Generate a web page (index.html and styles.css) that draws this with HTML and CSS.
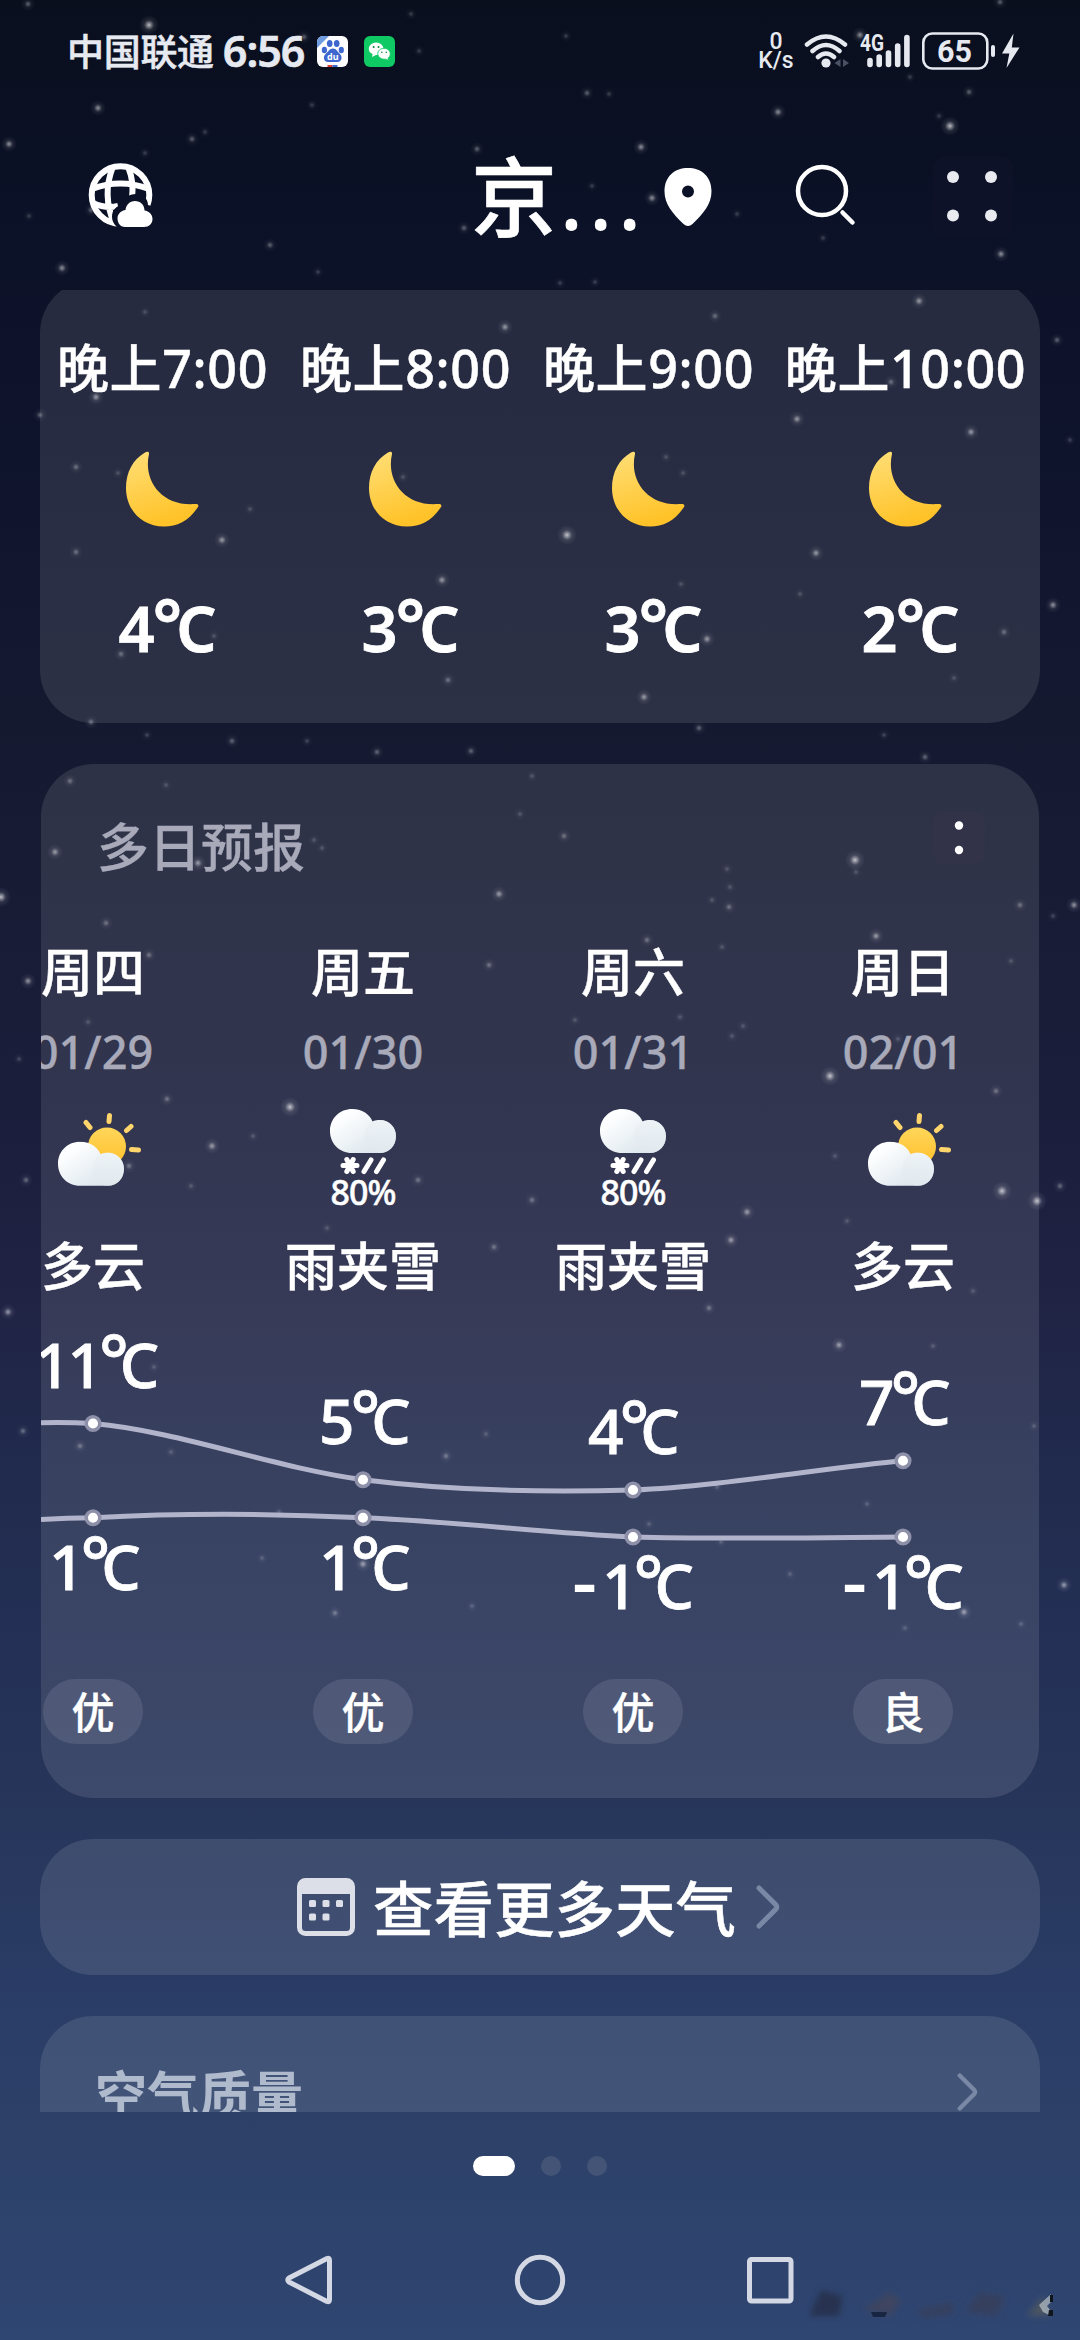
FILE: index.html
```html
<!DOCTYPE html>
<html lang="zh-CN">
<head>
<meta charset="utf-8">
<title>天气</title>
<link rel="stylesheet" href="styles.css">
</head>
<body>
<svg class="sky" id="sky" viewBox="0 0 1080 2340" aria-hidden="true">
  <defs>
    <radialGradient id="star">
      <stop offset="0" stop-color="#fff"/>
      <stop offset=".25" stop-color="#fff" stop-opacity=".55"/>
      <stop offset=".5" stop-color="#fff" stop-opacity=".14"/>
      <stop offset="1" stop-color="#fff" stop-opacity="0"/>
    </radialGradient>
  </defs>
</svg>

<svg class="defs" aria-hidden="true">
  <defs>
    <linearGradient id="moonFill" x1="0" y1="0" x2=".3" y2="1">
      <stop offset="0" stop-color="#ffdf78"/><stop offset="1" stop-color="#ffc329"/>
    </linearGradient>
    <linearGradient id="sunFill" x1="0" y1="0" x2="0" y2="1">
      <stop offset="0" stop-color="#ffd65a"/><stop offset="1" stop-color="#ffc02c"/>
    </linearGradient>
    <linearGradient id="cloudFill" x1="0" y1="0" x2="1" y2="1">
      <stop offset=".2" stop-color="#fdfeff"/><stop offset="1" stop-color="#d3e0e8"/>
    </linearGradient>
    <linearGradient id="puffFill" x1="0" y1="1" x2="1" y2="0">
      <stop offset="0" stop-color="#e0e8ee"/><stop offset="1" stop-color="#f2f6f9"/>
    </linearGradient>
    <symbol id="moon" viewBox="0 0 74 76">
      <path d="M20 1.500C22.500 0 24.500.8 24 3C18 29 36 55.500 70 53C73 52.700 74 54 73 56C64 70 52 75.500 39 75.500C17 75.500 1 59 1 37C1 21 8 8.500 20 1.500Z" fill="url(#moonFill)"/>
    </symbol>
    <symbol id="cloud" viewBox="0 0 66 44">
      <path d="M22 0C33 0 40 6 42.500 12.500C45 11.500 47 11 50 11C59 11 66 18 66 27C66 37 59 44 50 44H22C9 44 0 34 0 22C0 9 10 0 22 0Z" fill="url(#cloudFill)"/>
      <path d="M42.500 12.500C45 11.500 47 11 50 11C59 11 66 18 66 27C66 37 59 44 50 44C40 44 34 36 34.500 26C35 19 38 15 42.500 12.500Z" fill="url(#puffFill)" opacity=".6"/>
    </symbol>
    <symbol id="partly" viewBox="0 0 84 74">
      <circle cx="50" cy="33.500" r="19" fill="url(#sunFill)"/>
      <g stroke="#ffd56c" stroke-width="5" stroke-linecap="round">
        <path d="M52.500 2.500L52 8.500M29 9.500L33 14.500M74 13.500L69.500 17.500M74.500 36.500L81.500 37"/>
      </g>
      <use href="#cloud" x="1" y="28.500" width="66" height="44.500"/>
    </symbol>
    <symbol id="sleet" viewBox="0 0 66 66">
      <use href="#cloud" x="0" y="0" width="66" height="44"/>
      <g stroke="#fff" stroke-width="5" stroke-linecap="round">
        <path d="M13 56.500H27M16.800 50.500L23.200 62.500M23.200 50.500L16.800 62.500"/>
        <path d="M41 51L34 62.500M53.500 51L46.500 62.500"/>
      </g>
    </symbol>
  </defs>
</svg>

<div class="status-bar">
  <div class="status-left">
    <span class="carrier">中国联通</span>
    <span class="clock">6:56</span>
    <svg class="app-icon" viewBox="0 0 31 31">
      <defs><clipPath id="tile"><rect width="31" height="31" rx="6"/></clipPath></defs>
      <g clip-path="url(#tile)">
        <rect width="31" height="31" fill="#fdfdff"/>
        <path d="M0 0H12L0 12Z" fill="#6f9be0"/>
        <rect x="10.500" y="29" width="5" height="2" fill="#e0392f"/>
        <rect x="15.500" y="29" width="5" height="2" fill="#3a6bd0"/>
      </g>
      <g fill="#3d66cf">
        <ellipse cx="12.700" cy="7.500" rx="2.800" ry="3.600"/>
        <ellipse cx="19.700" cy="7.500" rx="2.800" ry="3.600"/>
        <ellipse cx="7.400" cy="14" rx="2.600" ry="3.300"/>
        <ellipse cx="24.300" cy="14" rx="2.600" ry="3.300"/>
        <path d="M16 12.500C19.500 12.500 20.500 16 23 18C26 21 24.500 26 20.500 26H11C7 26 5.500 21 8.500 18C11 16 12.500 12.500 16 12.500Z"/>
      </g>
      <text class="du" x="15.800" y="24" text-anchor="middle">du</text>
    </svg>
    <svg class="app-icon wechat" viewBox="0 0 31 31">
      <rect width="31" height="31" rx="6" fill="#0fc964"/>
      <path d="M12 6.500C16.500 6.500 19.500 9.500 19.500 13C19.500 16.500 16.500 19 12 19L8 21L8.600 18C6 17 4.800 15 4.800 13C4.800 9.500 8 6.500 12 6.500Z" fill="#fff"/>
      <path d="M20 12.300C23.500 12.300 26.300 14.800 26.300 17.800C26.300 19.800 25.300 21.300 24 22.200L24.500 24.500L21.700 23.200C17 23.700 13.800 21 13.800 17.800C13.800 14.800 16.500 12.300 20 12.300Z" fill="#fff" stroke="#0fc964" stroke-width=".9"/>
      <g fill="#0a7f42"><circle cx="9.700" cy="11" r="1"/><circle cx="14.500" cy="11" r="1"/><circle cx="17.800" cy="16.300" r=".8"/><circle cx="22.300" cy="16.300" r=".8"/></g>
    </svg>
  </div>
  <div class="status-right">
    <div class="netspeed"><span>0</span><span>K/s</span></div>
    <svg class="wifi" viewBox="0 0 46 36">
      <g fill="none" stroke="#e6e9ef" stroke-width="4.500" stroke-linecap="round">
        <path d="M3 11.500Q22 -4.500 41 11.500M8.500 18Q22 6 35.500 18M14 24Q22 17 30 24"/>
      </g>
      <circle cx="22" cy="30" r="4.600" fill="#e6e9ef"/>
      <g fill="#4b5164"><path d="M36.500 26V34L30.500 30ZM39 26V34L45 30Z"/></g>
    </svg>
    <svg class="signal" viewBox="0 0 50 36">
      <text class="net-type" x="0" y="17.500" textLength="24" lengthAdjust="spacingAndGlyphs">4G</text>
      <g stroke="#e6e9ef" stroke-width="5.600" stroke-linecap="round">
        <path d="M10 27.500V31.500M19.200 24V31.500M28.500 20V31.500M37.700 13V31.500M46.900 4.500V31.500"/>
      </g>
    </svg>
    <svg class="battery" viewBox="0 0 98 38">
      <rect x="1.300" y="1.500" width="64" height="35" rx="9" fill="none" stroke="#e6e9ef" stroke-width="2.600"/>
      <rect x="69" y="13" width="4" height="12" rx="2" fill="#e6e9ef"/>
      <path d="M91.500 1.500L80 21.500H87.300L84.500 36L97.500 15.500H89.800Z" fill="#e6e9ef"/>
      <text class="charge" x="32.500" y="30" text-anchor="middle" textLength="35" lengthAdjust="spacingAndGlyphs">65</text>
    </svg>
  </div>
</div>

<header class="header">
  <svg class="globe" viewBox="0 0 66 64">
    <defs>
      <mask id="globeMask">
        <rect width="66" height="64" fill="#fff"/>
        <path d="M38 67H58C66 67 70 60 70 54C70 48 66 43 60 42C60 35 54 31 48 31C41 31 36 35 35 41C28 43 24 47 24 54C24 60 29 67 38 67Z" fill="#000"/>
      </mask>
    </defs>
    <g fill="none" stroke="#fff" stroke-width="6" mask="url(#globeMask)">
      <circle cx="32.500" cy="32" r="28.800"/>
      <path d="M24.500 5Q14 32 26 60M40.500 5Q46 18 44 36M4 26Q32 15 61 26M5 40Q18 46 30 43"/>
    </g>
    <path d="M37 64H56C61 64 64.500 60.500 64.500 56C64.500 51.500 61 48 56.500 47.500C56.500 42 52.500 38 47 38C41.500 38 38 42 37.500 47C33 47.500 29.500 51 29.500 55.500C29.500 60.500 33 64 37 64Z" fill="#fff"/>
  </svg>
  <div class="city"><span class="city-name">京</span><span class="city-more">...</span></div>
  <svg class="pin" viewBox="0 0 48 58">
    <path fill-rule="evenodd" d="M24 0C37 0 47.500 8 47.500 23.500C47.500 36 39 46 28.500 56Q24 60 19.500 56C9 46 .5 36 .5 23.500C.5 8 11 0 24 0ZM24 17.500A6 6 0 1 0 24 29.500A6 6 0 1 0 24 17.500Z" fill="#fff"/>
  </svg>
  <svg class="search" viewBox="0 0 62 62">
    <circle cx="27" cy="27" r="24" fill="none" stroke="#fff" stroke-width="4.500"/>
    <path d="M47.500 48.500L57.500 58.500" stroke="#fff" stroke-width="4.500" stroke-linecap="round"/>
  </svg>
  <svg class="more" viewBox="0 0 80 80">
    <rect width="80" height="80" rx="12" fill="#1a1b3a" opacity=".18"/>
    <g fill="#e9ebf0"><circle cx="20" cy="21" r="6"/><circle cx="58" cy="21" r="6"/><circle cx="20" cy="59.500" r="6"/><circle cx="58" cy="59.500" r="6"/></g>
  </svg>
</header>

<main class="viewport">
  <section class="card hourly">
    <div class="hour"><span class="hour-time">晚上7:00</span><svg class="moon"><use href="#moon"/></svg><span class="hour-temp">4<i>°</i>C</span></div>
    <div class="hour"><span class="hour-time">晚上8:00</span><svg class="moon"><use href="#moon"/></svg><span class="hour-temp">3<i>°</i>C</span></div>
    <div class="hour"><span class="hour-time">晚上9:00</span><svg class="moon"><use href="#moon"/></svg><span class="hour-temp">3<i>°</i>C</span></div>
    <div class="hour"><span class="hour-time">晚上10:00</span><svg class="moon"><use href="#moon"/></svg><span class="hour-temp">2<i>°</i>C</span></div>
  </section>

  <section class="card daily">
    <div class="card-head">
      <h2 class="card-title">多日预报</h2>
      <svg class="card-menu" viewBox="0 0 52 52"><rect width="52" height="52" rx="10" fill="#35324b" opacity=".6"/><circle cx="26" cy="13.500" r="4.200" fill="#fff"/><circle cx="26" cy="38" r="4.200" fill="#fff"/></svg>
    </div>
    <div class="days">
      <div class="day"><span class="day-name">周四</span><span class="day-date">01/29</span><div class="day-icon"><svg class="partly"><use href="#partly"/></svg></div><span class="day-text">多云</span></div>
      <div class="day"><span class="day-name">周五</span><span class="day-date">01/30</span><div class="day-icon"><svg class="sleet"><use href="#sleet"/></svg><span class="chance">80%</span></div><span class="day-text">雨夹雪</span></div>
      <div class="day"><span class="day-name">周六</span><span class="day-date">01/31</span><div class="day-icon"><svg class="sleet"><use href="#sleet"/></svg><span class="chance">80%</span></div><span class="day-text">雨夹雪</span></div>
      <div class="day"><span class="day-name">周日</span><span class="day-date">02/01</span><div class="day-icon"><svg class="partly"><use href="#partly"/></svg></div><span class="day-text">多云</span></div>
    </div>
    <svg class="chart" viewBox="41 1320 998 310">
      <g class="curve">
        <path d="M41 1422.700Q67 1422 93 1423.500C179 1431 277 1468.500 363 1479.700C449 1490.500 547 1492.500 633 1490C719 1486.500 830 1467 903 1460.700"/>
        <path d="M41 1519.500Q67 1518 93 1517.700C179 1513 277 1513.500 363 1517.700C449 1521 547 1533 633 1537C719 1539.500 830 1537.500 903 1537"/>
      </g>
      <g class="halo">
        <circle cx="93" cy="1423.500" r="6.800"/><circle cx="363" cy="1479.700" r="6.800"/><circle cx="633" cy="1490" r="6.800"/><circle cx="903" cy="1460.700" r="6.800"/>
        <circle cx="93" cy="1517.700" r="6.800"/><circle cx="363" cy="1517.700" r="6.800"/><circle cx="633" cy="1537" r="6.800"/><circle cx="903" cy="1537" r="6.800"/>
      </g>
      <g class="temps">
        <text x="35" y="1388">1<tspan dx="-3">1</tspan><tspan class="deg" dx="-4" dy="-2">°</tspan><tspan dx="-9" dy="2">C</tspan></text>
        <text x="319" y="1444">5<tspan class="deg" dx="-4" dy="-2">°</tspan><tspan dx="-9" dy="2">C</tspan></text>
        <text x="588" y="1454">4<tspan class="deg" dx="-4" dy="-2">°</tspan><tspan dx="-9" dy="2">C</tspan></text>
        <text x="859" y="1425">7<tspan class="deg" dx="-4" dy="-2">°</tspan><tspan dx="-9" dy="2">C</tspan></text>
        <text x="49" y="1590">1<tspan class="deg" dx="-4" dy="-2">°</tspan><tspan dx="-9" dy="2">C</tspan></text>
        <text x="319" y="1590">1<tspan class="deg" dx="-4" dy="-2">°</tspan><tspan dx="-9" dy="2">C</tspan></text>
        <text x="572" y="1609"><tspan class="minus">-</tspan><tspan dx="5">1</tspan><tspan class="deg" dx="-4" dy="-2">°</tspan><tspan dx="-9" dy="2">C</tspan></text>
        <text x="842" y="1609"><tspan class="minus">-</tspan><tspan dx="5">1</tspan><tspan class="deg" dx="-4" dy="-2">°</tspan><tspan dx="-9" dy="2">C</tspan></text>
      </g>
    </svg>
    <div class="days air">
      <div class="day"><span class="pill">优</span></div>
      <div class="day"><span class="pill">优</span></div>
      <div class="day"><span class="pill">优</span></div>
      <div class="day"><span class="pill">良</span></div>
    </div>
  </section>

  <section class="card more-weather">
    <svg class="calendar" viewBox="0 0 58 58">
      <rect x="2.500" y="2.500" width="53" height="53" rx="6" fill="none" stroke="#dcdfe8" stroke-width="5"/>
      <path d="M2 16V8Q2 2 8 2H50Q56 2 56 8V16Z" fill="#dcdfe8"/>
      <g fill="#dcdfe8"><rect x="12" y="22" width="7" height="7" rx="1.500"/><rect x="25.500" y="22" width="7" height="7" rx="1.500"/><rect x="39" y="22" width="7" height="7" rx="1.500"/><rect x="12" y="35.500" width="7" height="7" rx="1.500"/><rect x="25.500" y="35.500" width="7" height="7" rx="1.500"/></g>
    </svg>
    <span class="more-label">查看更多天气</span>
    <svg class="chevron" viewBox="0 0 24 44"><path d="M3 3L20 20Q21.500 22 20 24L3 41"/></svg>
  </section>

  <section class="card quality">
    <h2 class="quality-title">空气质量</h2>
    <svg class="chevron small" viewBox="0 0 24 44"><path d="M3 3L20 20Q21.500 22 20 24L3 41"/></svg>
  </section>
</main>

<div class="pager"><i class="page current"></i><i class="page"></i><i class="page"></i></div>

<nav class="nav-bar">
  <svg class="nav-icon" viewBox="0 0 52 52"><path d="M43 4.500Q45.500 3.500 45.500 6.500V45.500Q45.500 48.500 43 47.500L5 28Q2.500 26 5 24Z"/></svg>
  <svg class="nav-icon" viewBox="0 0 52 52"><circle cx="26" cy="26" r="22.700"/></svg>
  <svg class="nav-icon" viewBox="0 0 52 52"><rect x="5.500" y="5.500" width="41.500" height="41.500" rx="2"/></svg>
</nav>

<svg class="smudge" viewBox="0 0 260 50" aria-hidden="true">
  <defs><filter id="soft" x="-10%" y="-50%" width="120%" height="200%"><feGaussianBlur stdDeviation="3"/></filter></defs>
  <g filter="url(#soft)">
    <path d="M4 36L16 10L38 16L34 36Z" fill="#28334f"/>
    <path d="M58 30L84 12L96 20L86 36Z" fill="#3d4560"/>
    <path d="M112 30L148 22L148 34L118 38ZM160 32L174 12L200 16L192 36Z" fill="#36405e"/>
    <path d="M222 36L238 16L244 36Z" fill="#4b5560"/>
  </g>
  <path d="M66 32H82L80 37H68Z" fill="#0d1830" opacity=".7"/>
  <path d="M234 25L246 14V22L242 26L246 31V36L238 32Z" fill="#b9c3c6" opacity=".7"/>
  <path d="M245 15H248V22H245ZM244 30H248V36H243Z" fill="#10161c"/>
</svg>
<script src="sky.js"></script>
</body>
</html>
```

FILE: sky.js
```js
// x, y, brightness (1 = faint, 2 = normal, 3 = bright, 4 = large)
const stars = `28,4,2 149,25,4 98,108,3 192,139,2 205,132,1 312,105,1 9,144,3 145,153,1 29,216,1 270,245,2 62,268,3 304,37,2 411,14,1 419,51,1 477,149,2 464,228,2 91,210,2
566,36,1 587,93,2 609,94,1 778,112,3 641,147,3 652,198,3 592,186,1 737,214,1 823,238,1 1000,2,2 860,35,3 910,77,1 969,92,2 939,116,1 950,126,4 1001,254,3
145,312,1 505,327,3 96,397,3 40,415,2 76,467,2 118,473,1 250,509,1 222,540,3 76,552,2 403,477,1 442,580,3 448,680,2 121,654,2 214,636,1 91,722,2 147,735,1 232,741,2 307,741,1 318,272,1
560,283,1 595,282,1 919,301,3 715,316,2 1057,340,2 891,382,2 797,419,3 971,432,3 1070,440,1 666,457,1 683,473,1 567,535,4 816,553,3 681,584,1 800,594,1 1053,605,3 1004,632,2 707,639,3 954,678,1 644,697,3 699,728,2 884,735,1
377,752,2 471,751,2 70,781,2 166,785,1 532,776,1 520,814,1 55,852,3 198,863,3 314,840,1 322,848,1 499,894,3 1,897,4 106,923,2 149,955,2 489,965,2 28,981,3 88,1022,1 19,1059,1 167,1099,2 290,1107,4 212,1146,3 253,1136,1 129,1166,2 26,1180,2 191,1186,1 418,1180,2 532,1200,2 327,1228,1 494,1247,2
925,757,2 564,836,2 855,860,4 856,872,1 727,869,1 730,887,1 712,900,1 729,907,2 1020,905,2 1074,905,3 1053,916,1 647,940,2 876,936,3 722,947,1 1011,961,1 575,1020,1 680,1017,1 743,1026,1 732,1036,1 898,1039,1 830,1076,4 996,1091,2 835,1156,1 1002,1191,4 1060,1186,2 1037,1201,4 747,1212,3 847,1221,1 731,1240,3 973,1291,1
8,1312,3 154,1367,1 23,1431,2 80,1446,2 171,1452,1 486,1434,1 446,1456,2 279,1512,1 262,1558,1 363,1564,3 335,1613,2 472,1606,1
709,1308,2 839,1345,3 933,1346,1 1034,1426,1 717,1487,1 867,1504,1 649,1524,1 721,1542,1 790,1574,1 1064,1585,3 964,1612,3 905,1628,1 1021,1624,1`;

const radius = [0, 6, 7, 8, 10];
const opacity = [0, 0.22, 0.36, 0.55, 0.72];
const sky = document.getElementById('sky');

for (const entry of stars.split(/\s+/)) {
  const [x, y, level] = entry.split(',').map(Number);
  const star = document.createElementNS('http://www.w3.org/2000/svg', 'circle');
  star.setAttribute('cx', x);
  star.setAttribute('cy', y);
  star.setAttribute('r', radius[level]);
  star.setAttribute('fill', 'url(#star)');
  star.setAttribute('opacity', opacity[level]);
  sky.appendChild(star);
}
```

FILE: styles.css
```css
* { box-sizing: border-box; }

body {
  position: relative;
  margin: 0;
  width: 1080px;
  height: 2340px;
  overflow: hidden;
  display: flex;
  flex-direction: column;
  color: #fff;
  font-family: "Noto Sans", "Noto Sans CJK SC", sans-serif;
  font-weight: 500;
  background: linear-gradient(#0a0f1e 0, #0b1126 200px, #0f142d 450px, #151930 720px, #171b33 850px, #1a1e3b 1100px, #202344 1300px, #202a4c 1450px, #232f54 1620px, #27355a 1800px, #2a3d66 2000px, #2d4169 2150px, #2f4672 2340px);
}

.sky { position: absolute; inset: 0; width: 1080px; height: 2340px; z-index: -1; }
.defs { position: absolute; width: 0; height: 0; }
svg { display: block; flex: none; }

/* Status bar */
.status-bar { height: 102px; padding: 0 60px 0 67px; display: flex; justify-content: space-between; align-items: center; color: #e6e9ef; }
.status-left, .status-right { display: flex; align-items: center; }
.carrier { margin-top: -3px; font: 500 37px/44px "Noto Sans CJK SC", sans-serif; letter-spacing: -.3px; -webkit-text-stroke: .5px; }
.clock { margin-left: 9px; font: 600 43px/44px "Noto Sans", sans-serif; letter-spacing: -1px; -webkit-text-stroke: .6px; }
.app-icon { width: 31px; height: 31px; margin-left: 13px; }
.app-icon.wechat { margin-left: 16px; }
.du { font: 700 9px "Noto Sans", sans-serif; fill: #fff; }
.netspeed { display: flex; flex-direction: column; align-items: center; width: 36px; font: 500 23px/19px Roboto, sans-serif; margin-right: 10px; }
.wifi { width: 46px; height: 36px; margin-right: 10px; }
.signal { width: 50px; height: 36px; margin-right: 12px; }
.net-type { font: 700 23px Roboto, sans-serif; fill: #e6e9ef; }
.battery { width: 98px; height: 38px; }
.charge { font: 700 32px Roboto, sans-serif; fill: #e6e9ef; }

/* Header */
.header { height: 188px; display: flex; align-items: flex-start; padding-left: 88px; }
.globe { width: 66px; height: 64px; margin-top: 61px; }
.city { display: flex; align-items: baseline; margin: 26px 0 0 317px; width: 168px; height: 130px; font: 500 86px/130px "Noto Sans CJK SC", sans-serif; -webkit-text-stroke: .6px; }
.city-more { margin-left: 3px; font: 500 84px/100px "Noto Sans", sans-serif; letter-spacing: 6.300px; -webkit-text-stroke: 0; }
.pin { width: 48px; height: 58px; margin: 66px 0 0 25px; }
.search { width: 62px; height: 62px; margin: 62px 0 0 83px; }
.more { width: 80px; height: 80px; margin: 54px 0 0 76px; }

/* Scrolling area */
.viewport { height: 1822px; overflow: hidden; padding: 0 40px; }
.card { border-radius: 53px; background: rgba(255, 255, 255, .105); overflow: hidden; }

.hourly { height: 443px; margin-top: -10px; display: grid; grid-template-columns: 243px 243px 243px 271px; }
.hour { display: flex; flex-direction: column; align-items: center; white-space: nowrap; }
.hour-time { margin: 55px 0 0 2px; font-size: 52px; line-height: 66px; letter-spacing: .6px; -webkit-text-stroke: .5px; }
.moon { width: 74px; height: 76px; margin-top: 50px; }
.hour-temp { margin: 64px 0 0 12px; font-size: 63px; line-height: 74px; font-weight: 600; -webkit-text-stroke: .8px; }
.hour-temp i { font-style: normal; font-size: 70px; line-height: 0; vertical-align: 2px; margin: 0 -6px 0 -2px; }

.daily { height: 1034px; margin: 41px 1px 0; }
.card-head { height: 166px; display: flex; justify-content: space-between; padding: 48px 54px 0 56px; }
.card-title { margin: 0; font: 500 52px/66px "Noto Sans CJK SC", sans-serif; color: #a8aaba; -webkit-text-stroke: .3px; }
.card-menu { width: 52px; height: 52px; }
.days { display: grid; grid-template-columns: repeat(4, 270px); margin-left: -83px; }
.day { display: flex; flex-direction: column; align-items: center; white-space: nowrap; }
.day-name, .day-text { font: 500 52px/76px "Noto Sans CJK SC", sans-serif; -webkit-text-stroke: .4px; }
.day-name { margin-top: 2px; }
.day-date { margin-top: 14px; font-size: 45px; line-height: 60px; color: #a8aaba; -webkit-text-stroke: .4px; }
.day-icon { width: 84px; height: 108px; margin-top: 27px; display: flex; flex-direction: column; align-items: center; }
.partly { width: 84px; height: 74px; margin: 4px 0 0 11px; }
.sleet { width: 66px; height: 66px; }
.chance { margin-top: -2px; font-size: 34px; line-height: 38px; letter-spacing: -1px; -webkit-text-stroke: .5px; }
.day-text { margin-top: 9px; }
.chart { width: 998px; height: 310px; margin-top: 18px; }
.curve { fill: none; stroke: #b2b4cb; stroke-width: 5; }
.halo { fill: #fff; stroke: #8d90a8; stroke-width: 3.500px; }
.temps { font-size: 62px; font-weight: 500; fill: #fff; stroke: #fff; stroke-width: .8px; }
.deg { font-size: 70px; }
.minus { font-size: 78px; stroke: none; }
.air { margin-top: 49px; }
.pill { width: 100px; height: 65px; border-radius: 33px; background: rgba(255, 255, 255, .1); text-align: center; font: 500 43px/62px "Noto Sans CJK SC", sans-serif; -webkit-text-stroke: .4px; }

.more-weather { height: 136px; margin-top: 41px; display: flex; align-items: center; padding-left: 257px; }
.calendar { width: 58px; height: 58px; }
.more-label { margin: -3px 0 0 18px; font: 500 60.500px/80px "Noto Sans CJK SC", sans-serif; -webkit-text-stroke: .4px; }
.chevron { width: 24px; height: 44px; margin-left: 20px; fill: none; stroke: #7988a5; stroke-width: 5; stroke-linecap: round; }

.quality { height: 300px; margin-top: 41px; padding: 41px 62px 0 55px; display: flex; justify-content: space-between; }
.quality-title { margin: 0; font: 700 52px/72px "Noto Sans CJK SC", sans-serif; color: #b0bacd; }
.chevron.small { width: 21px; height: 38px; margin-top: 16px; }

/* Pager and system navigation */
.pager { height: 108px; display: flex; justify-content: center; align-items: center; gap: 26px; }
.page { width: 20px; height: 20px; border-radius: 10px; background: #435477; }
.page.current { width: 42px; background: #fff; }
.nav-bar { height: 120px; display: flex; justify-content: center; gap: 178px; padding-top: 34px; }
.nav-icon { width: 52px; height: 52px; fill: none; stroke: #d3d8e4; stroke-width: 5; stroke-linejoin: round; }
.smudge { position: absolute; left: 805px; top: 2280px; width: 260px; height: 50px; }
```
